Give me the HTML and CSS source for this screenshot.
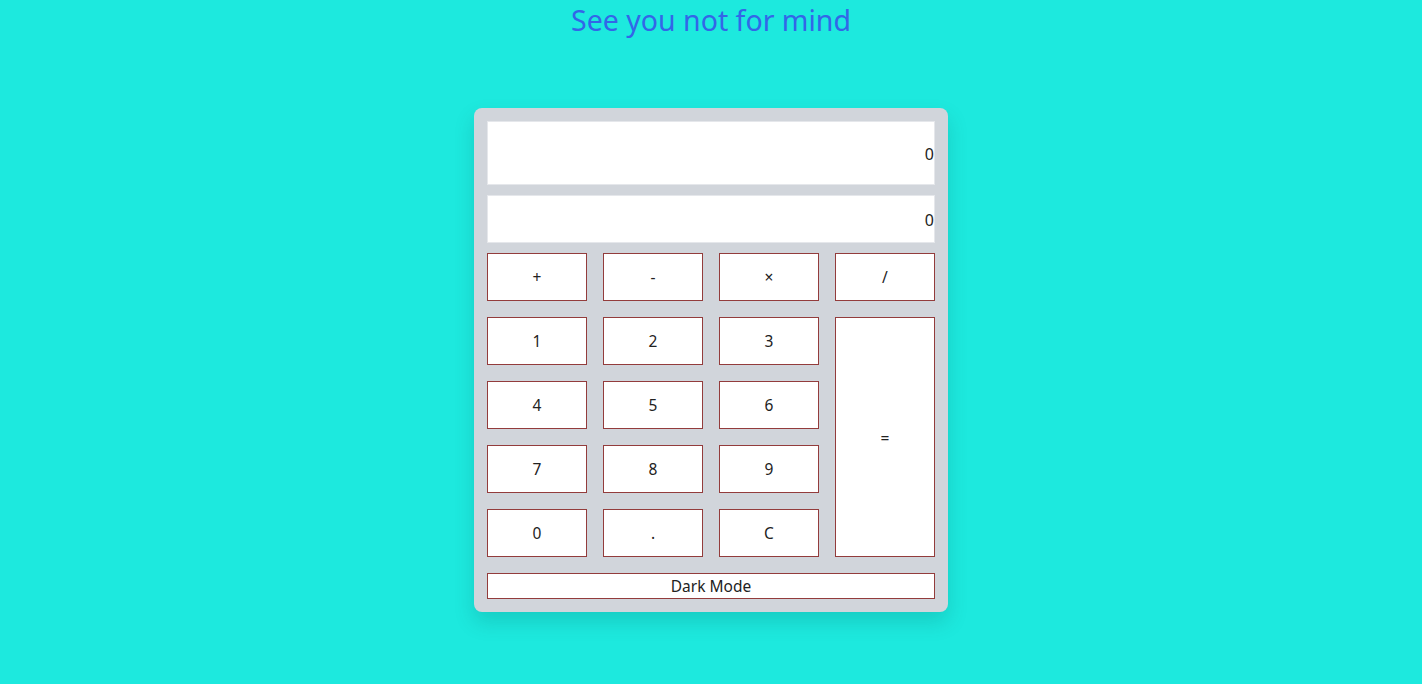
FILE: index.html
```html
<!DOCTYPE html>
<html lang="en">
<head>
<meta charset="utf-8">
<title>Calculator</title>
<link rel="stylesheet" href="styles.css">
</head>
<body>
<h1 class="title">See you not for mind</h1>
<div class="calc">
  <div class="display display-main">0</div>
  <div class="display display-sub">0</div>
  <div class="keys">
    <button class="key">+</button>
    <button class="key">-</button>
    <button class="key">×</button>
    <button class="key">/</button>
    <button class="key">1</button>
    <button class="key">2</button>
    <button class="key">3</button>
    <button class="key key-eq">=</button>
    <button class="key">4</button>
    <button class="key">5</button>
    <button class="key">6</button>
    <button class="key">7</button>
    <button class="key">8</button>
    <button class="key">9</button>
    <button class="key">0</button>
    <button class="key">.</button>
    <button class="key">C</button>
  </div>
  <button class="mode">Dark Mode</button>
</div>
</body>
</html>
```
FILE: styles.css
```css
html, body {
  margin: 0;
  padding: 0;
}
body {
  background: #1de9de;
  font-family: "Noto Sans", "Segoe UI", sans-serif;
  color: #222;
  min-height: 684px;
}
.title {
  margin: 0;
  text-align: center;
  font-weight: 400;
  font-size: 28.5px;
  line-height: 40px;
  color: #3366e8;
}
.calc {
  width: 448px;
  margin: 68px auto 0;
  padding: 13px;
  background: #d1d5db;
  border-radius: 8px;
  box-shadow: 0 10px 20px rgba(0, 80, 80, 0.18);
  display: flex;
  flex-direction: column;
}
.display {
  box-sizing: border-box;
  background: #fff;
  border: 1px solid #e5e7eb;
  font-size: 16px;
  display: flex;
  align-items: center;
  justify-content: flex-end;
  padding-top: 2px;
}
.display-main {
  height: 64px;
}
.display-sub {
  height: 48px;
  margin-top: 10px;
}
.keys {
  margin-top: 10px;
  display: grid;
  grid-template-columns: repeat(4, 100px);
  grid-auto-rows: 48px;
  gap: 16px;
}
.key, .mode {
  box-sizing: border-box;
  background: #fff;
  border: 1px solid #933c3c;
  font-family: "Noto Sans", "Segoe UI", sans-serif;
  font-size: 15.5px;
  color: #222;
  padding: 0;
  margin: 0;
}
.key-eq {
  grid-column: 4;
  grid-row: 2 / span 4;
  padding-top: 2px;
}
.mode {
  margin-top: 16px;
  height: 26px;
  width: 448px;
  font-size: 15.5px;
  line-height: 24px;
}
```
